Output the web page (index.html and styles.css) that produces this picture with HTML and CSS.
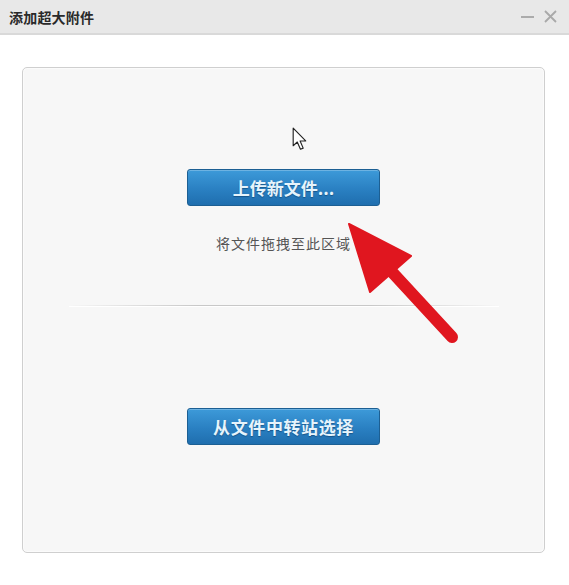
FILE: index.html
```html
<!DOCTYPE html>
<html lang="zh-CN">
<head>
<meta charset="utf-8">
<title>添加超大附件</title>
<link rel="stylesheet" href="styles.css">
</head>
<body>
<div class="window">
  <div class="titlebar">
    <span class="title">添加超大附件</span>
    <div class="controls">
      <span class="ctl min"></span>
      <svg class="ctl close" width="13" height="13" viewBox="0 0 13 13"><path d="M1 1L12 12M12 1L1 12" stroke="#a9a9a9" stroke-width="1.8" fill="none"/></svg>
    </div>
  </div>
  <div class="body">
    <div class="panel">
      <svg class="cursor" width="16" height="25" viewBox="0 0 14 22"><path d="M1 1 L1 16.5 L4.6 13.2 L7.4 19.6 L9.8 18.6 L7.1 12.3 L12 12.3 Z" fill="#fff" stroke="#222" stroke-width="1" stroke-linejoin="round"/></svg>
      <button class="btn btn-upload">上传新文件...</button>
      <p class="hint">将文件拖拽至此区域</p>
      <div class="divider"></div>
      <button class="btn btn-transfer">从文件中转站选择</button>
    </div>
  </div>
  <svg class="arrow" width="569" height="585" viewBox="0 0 569 585">
    <line x1="392" y1="272" x2="452" y2="337" stroke="#e0161f" stroke-width="12" stroke-linecap="round"/>
    <polygon points="349,224 411,256 370,292" fill="#e0161f" stroke="#e0161f" stroke-width="2" stroke-linejoin="round"/>
  </svg>
</div>
</body>
</html>
```
FILE: styles.css
```css
html, body {
  margin: 0;
  padding: 0;
  background: #ffffff;
}
body {
  font-family: "Noto Sans CJK SC", "Noto Sans", sans-serif;
  width: 569px;
  height: 585px;
  overflow: hidden;
}
.window {
  position: relative;
  width: 569px;
  height: 585px;
}
.titlebar {
  height: 33px;
  background: #e8e8e8;
  border-bottom: 2px solid #d9d9d9;
  display: flex;
  align-items: center;
  justify-content: space-between;
  padding: 0 12px 0 9px;
}
.title {
  font-size: 14px;
  font-weight: bold;
  color: #2a2a2a;
  letter-spacing: 0.2px;
}
.controls {
  display: flex;
  align-items: center;
  gap: 10px;
}
.min {
  display: block;
  width: 13px;
  height: 2px;
  background: #ababab;
}
.close {
  display: block;
}
.body {
  padding: 32px 24px 0 22px;
}
.panel {
  position: relative;
  height: 484px;
  background: #f7f7f7;
  border: 1px solid #cfcfcf;
  border-radius: 5px;
  box-shadow: inset 0 0 0 1px #fbfbfb;
  display: flex;
  flex-direction: column;
  align-items: center;
}
.cursor {
  position: absolute;
  left: 269px;
  top: 59px;
}
.btn {
  width: 193px;
  height: 37px;
  margin: 0;
  padding: 0;
  border: 1px solid #1c5f93;
  border-radius: 3px;
  background: linear-gradient(#3d9ad9, #2a80c2 55%, #1f6eae);
  color: #e6f4fc;
  font-family: "Noto Sans CJK SC", "Noto Sans", sans-serif;
  font-size: 17px;
  font-weight: bold;
  text-shadow: 0 1px 1px rgba(0, 40, 80, 0.45);
  box-shadow: inset 0 1px 0 rgba(255, 255, 255, 0.25);
  cursor: pointer;
}
.btn-upload {
  margin-top: 101px;
}
.btn-transfer {
  margin-top: 102px;
  letter-spacing: 0.6px;
}
.hint {
  margin: 27px 0 0 0;
  height: 20px;
  line-height: 20px;
  font-size: 14px;
  color: #555555;
  letter-spacing: 1px;
}
.divider {
  margin-top: 52px;
  width: 430px;
  height: 1px;
  background: linear-gradient(to right, rgba(200,200,200,0), #c8c8c8 30%, #c8c8c8 70%, rgba(200,200,200,0));
  box-shadow: 0 1px 0 #ffffff;
}
.arrow {
  position: absolute;
  left: 0;
  top: 0;
  pointer-events: none;
}
```
